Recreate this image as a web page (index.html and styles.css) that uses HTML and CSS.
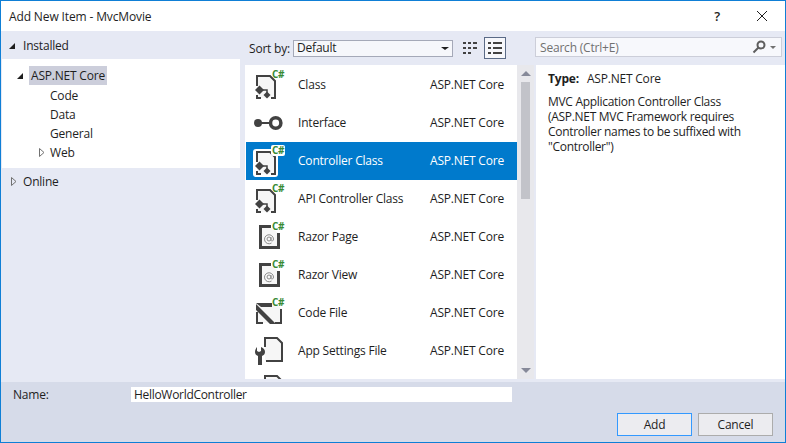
FILE: index.html
```html
<!DOCTYPE html>
<html lang="en">
<head>
  <meta charset="UTF-8">
  <title>Add New Item - MvcMovie</title>
  <link rel="stylesheet" href="styles.css">
</head>
<body>
  <svg class="defs" width="0" height="0">
    <symbol id="ic-class" viewBox="0 0 36 36">
      <rect class="halo" x="3" y="6" width="25" height="28" rx="3"/>
      <path class="doc" d="M7 9h13l5 5v17H7z"/>
      <path class="line" d="M7 19V9h13l5 5v17h-4M7 28v3h4"/>
      <path class="solid" d="M9.500 18.500l4.500 4.500-4.500 4.500L5 23z"/>
      <path class="link" d="M13 23h4v3"/>
      <path class="solid" d="M17 24.500l3.500 3.500-3.500 3.500-3.500-3.500z"/>
    </symbol>
    <symbol id="ic-interface" viewBox="0 0 36 36">
      <circle class="solid" cx="8" cy="18" r="4"/>
      <path class="bar" d="M11 18h10"/>
      <circle class="ring" cx="25.700" cy="18" r="5.200"/>
    </symbol>
    <symbol id="ic-razor" viewBox="0 0 36 36">
      <path class="doc" d="M10 8h10l8 6v15H10z"/>
      <path class="thick" d="M10.500 28V7.500H21M9 28.500h19.500V14"/>
      <circle class="at" cx="19" cy="20" r="2"/>
      <path class="at" d="M21 18v3c0 1.500 2.500 1.500 2.500-1a4.500 4.500 0 1 0-2 4"/>
    </symbol>
    <symbol id="ic-code" viewBox="0 0 36 36">
      <path class="doc" d="M7 9h19l6 5v14H7z"/>
      <path class="solid" d="M6 8h16v4H11zM6 9l20 20h-6L6 15z"/>
      <path class="line" d="M7 17v11h6M25 28h6V14"/>
    </symbol>
    <symbol id="ic-settings" viewBox="0 0 36 36">
      <path class="doc" d="M15 5h12l5 5v18H15z"/>
      <path class="line" d="M15 14V5h12l5 5v18H16"/>
      <path class="solid" d="M7 14v4l2 1 2-1v-4c3 1 4 3 4 5 0 2-1 3-3 4v9H8v-9c-2-1-3-2-3-4s1-4 2-5z"/>
    </symbol>
  </svg>

  <div class="window">
    <header class="titlebar">
      <span class="title">Add New Item - MvcMovie</span>
      <span class="help">?</span>
      <svg class="close" width="12" height="12" viewBox="0 0 12 12"><path d="M1 1l10 10M11 1L1 11"/></svg>
    </header>

    <div class="main">
      <aside class="sidebar">
        <div class="node-top installed"><i class="tri open"></i>Installed</div>
        <ul class="tree">
          <li class="sub"><i class="tri open"></i><span class="current">ASP.NET Core</span></li>
          <li>Code</li>
          <li>Data</li>
          <li>General</li>
          <li><svg class="tri closed" width="6" height="9" viewBox="0 0 6 9"><path d="M.5.5l4.500 4-4.500 4z"/></svg>Web</li>
        </ul>
        <div class="node-top online"><svg class="tri closed" width="6" height="9" viewBox="0 0 6 9"><path d="M.5.5l4.500 4-4.500 4z"/></svg>Online</div>
      </aside>

      <section class="center">
        <div class="toolbar">
          <label class="sort-label">Sort by:</label>
          <div class="select">Default<i class="caret"></i></div>
          <svg class="view-grid" width="14" height="14" viewBox="0 0 14 14">
            <path d="M0 0h3v2H0zM5 0h3v2H5zM10 0h4v2h-4zM0 5h3v2H0zM5 5h3v2H5zM10 5h4v2h-4zM0 10h3v2H0zM5 10h3v2H5z"/>
          </svg>
          <div class="view-list">
            <svg width="14" height="12" viewBox="0 0 14 12">
              <path d="M0 0h3v2H0zM5 0h9v2H5zM0 5h3v2H0zM5 5h9v2H5zM0 10h3v2H0zM5 10h9v2H5z"/>
            </svg>
          </div>
        </div>

        <div class="list-wrap">
          <ul class="items">
            <li class="item"><div class="icon"><svg><use href="#ic-class"/></svg><b class="cs">C#</b></div><span class="name">Class</span><span class="src">ASP.NET Core</span></li>
            <li class="item"><div class="icon"><svg><use href="#ic-interface"/></svg></div><span class="name">Interface</span><span class="src">ASP.NET Core</span></li>
            <li class="item selected"><div class="icon"><svg><use href="#ic-class"/></svg><b class="cs">C#</b></div><span class="name">Controller Class</span><span class="src">ASP.NET Core</span></li>
            <li class="item"><div class="icon"><svg><use href="#ic-class"/></svg><b class="cs">C#</b></div><span class="name">API Controller Class</span><span class="src">ASP.NET Core</span></li>
            <li class="item"><div class="icon"><svg><use href="#ic-razor"/></svg><b class="cs">C#</b></div><span class="name">Razor Page</span><span class="src">ASP.NET Core</span></li>
            <li class="item"><div class="icon"><svg><use href="#ic-razor"/></svg><b class="cs">C#</b></div><span class="name">Razor View</span><span class="src">ASP.NET Core</span></li>
            <li class="item"><div class="icon"><svg><use href="#ic-code"/></svg><b class="cs">C#</b></div><span class="name">Code File</span><span class="src">ASP.NET Core</span></li>
            <li class="item"><div class="icon"><svg><use href="#ic-settings"/></svg></div><span class="name">App Settings File</span><span class="src">ASP.NET Core</span></li>
            <li class="item"><div class="icon"><svg><use href="#ic-settings"/></svg></div></li>
          </ul>
          <div class="scrollbar">
            <i class="arrow up"></i>
            <div class="track"><div class="thumb"></div></div>
            <i class="arrow down"></i>
          </div>
        </div>
      </section>

      <section class="right">
        <div class="search">
          <span class="search-text">Search (Ctrl+E)</span>
          <svg width="14" height="14" viewBox="0 0 14 14"><circle cx="9" cy="5" r="3.500"/><path d="M6.500 7.500L1.500 12.500"/></svg>
          <i class="search-caret"></i>
        </div>
        <div class="details">
          <p class="type"><b>Type:</b>ASP.NET Core</p>
          <p class="desc">MVC Application Controller Class<br>(ASP.NET MVC Framework requires<br>Controller names to be suffixed with<br>"Controller")</p>
        </div>
      </section>
    </div>

    <footer class="footer">
      <div class="name-row">
        <label class="name-label">Name:</label>
        <div class="name-input">HelloWorldController</div>
      </div>
      <div class="buttons">
        <button class="btn primary">Add</button>
        <button class="btn">Cancel</button>
      </div>
    </footer>
  </div>
</body>
</html>
```

FILE: styles.css
```css
* {
  box-sizing: border-box;
}
html, body {
  margin: 0;
  padding: 0;
}
body {
  font-family: "Open Sans", "Noto Sans", sans-serif;
  font-size: 12px;
  letter-spacing: -0.2px;
  color: #1e1e1e;
  background: #fff;
  overflow: hidden;
}
ul {
  list-style: none;
  margin: 0;
  padding: 0;
}
p {
  margin: 0;
}
.defs {
  position: absolute;
}
.window {
  width: 786px;
  height: 443px;
  border: 1px solid #0f7fd6;
  display: flex;
  flex-direction: column;
}

/* title bar */
.titlebar {
  height: 30px;
  flex: none;
  background: #fff;
  display: flex;
  align-items: center;
  padding-left: 8px;
}
.title {
  flex: 1;
  letter-spacing: -0.13px;
}
.help {
  font-size: 13px;
  font-weight: 600;
  margin-right: 36px;
}
.close {
  margin-right: 17px;
}
.close path {
  stroke: #1e1e1e;
  fill: none;
}

/* main area */
.main {
  flex: 1;
  min-height: 0;
  background: #e6e9f4;
  display: flex;
}
.sidebar {
  width: 238px;
  flex: none;
  margin-left: 1px;
  padding-top: 4px;
}
.node-top {
  height: 24px;
  padding-left: 21px;
  display: flex;
  align-items: center;
  position: relative;
}
.installed {
  padding-bottom: 4px;
}
.online {
  margin-top: 1px;
}
.tree {
  background: #fff;
  height: 109px;
  padding-top: 7px;
}
.tree li {
  height: 19px;
  line-height: 19px;
  padding-left: 48px;
  position: relative;
}
.tree li.sub {
  height: 20px;
  padding-left: 27px;
}
.current {
  display: inline-block;
  background: #cccedb;
  padding: 0 2px;
}
.tri {
  position: absolute;
}
.tri.open {
  width: 0;
  height: 0;
  border-style: solid;
  border-width: 0 0 6px 6px;
  border-color: transparent transparent #1e1e1e transparent;
}
.tri.closed path {
  fill: #fff;
  stroke: #717171;
}
.online .tri.closed path {
  fill: #e6e9f4;
}
.node-top .tri.open {
  left: 7px;
  top: 8px;
}
.node-top .tri.closed {
  left: 9px;
  top: 8px;
}
.tree .tri.open {
  left: 15px;
  top: 7px;
}
.tree .tri.closed {
  left: 37px;
  top: 5px;
}

/* center column */
.center {
  width: 293px;
  flex: none;
  display: flex;
  flex-direction: column;
  padding-left: 5px;
}
.toolbar {
  height: 34px;
  flex: none;
  display: flex;
  align-items: center;
  padding-left: 4px;
}
.sort-label {
  width: 44px;
  flex: none;
}
.select {
  width: 160px;
  height: 17px;
  border: 1px solid #a5a9b8;
  background: #f6f7fb;
  padding-left: 3px;
  line-height: 14px;
  position: relative;
}
.caret {
  position: absolute;
  right: 3px;
  top: 6px;
  border-style: solid;
  border-width: 3px 4px 0 4px;
  border-color: #1e1e1e transparent transparent transparent;
}
.view-grid {
  margin-left: 10px;
  margin-top: 1px;
}
.view-grid path,
.view-list path {
  fill: #424242;
}
.view-list {
  width: 22px;
  height: 22px;
  margin-left: 7px;
  border: 1px solid #5a6a86;
  background: #f6f7fb;
  display: flex;
  align-items: center;
  justify-content: center;
}
.list-wrap {
  flex: 1;
  min-height: 0;
  display: flex;
  background: #fff;
  margin-bottom: 3px;
}
.items {
  width: 272px;
  flex: none;
  overflow: hidden;
  padding-top: 1px;
}
.item {
  height: 38px;
  display: flex;
  align-items: center;
  margin-left: 1px;
  padding-bottom: 1px;
}
.icon {
  width: 36px;
  height: 36px;
  flex: none;
  margin-left: 4px;
  margin-right: 12px;
  margin-top: 1px;
  position: relative;
}
.icon svg {
  width: 36px;
  height: 36px;
  display: block;
}
.name {
  width: 132px;
  flex: none;
}
.selected {
  background: #007acc;
  color: #fff;
  --halo: #fff;
}
.halo {
  fill: var(--halo, none);
}
.doc {
  fill: #f6f6f6;
}
.line {
  fill: none;
  stroke: #424242;
  stroke-width: 2;
}
.link {
  fill: none;
  stroke: #424242;
  stroke-width: 1.500;
}
.thick {
  fill: none;
  stroke: #424242;
  stroke-width: 3;
}
.solid {
  fill: #424242;
}
.bar {
  stroke: #424242;
  stroke-width: 2;
}
.ring {
  fill: #fff;
  stroke: #424242;
  stroke-width: 3.500;
}
.at {
  fill: none;
  stroke: #8a8a8a;
}
.cs {
  position: absolute;
  left: 21px;
  top: 2px;
  padding: 0 1px;
  height: 11px;
  line-height: 11px;
  border-radius: 2px;
  color: #388a34;
  font-size: 10px;
  letter-spacing: -0.3px;
  font-weight: 700;
}
.selected .cs {
  background: #fff;
}

/* scroll bar */
.scrollbar {
  width: 17px;
  flex: none;
  background: #e8e8ec;
  display: flex;
  flex-direction: column;
  align-items: center;
}
.arrow {
  flex: none;
  width: 0;
  height: 0;
  border-style: solid;
  border-color: transparent;
  margin: 6px 0;
}
.arrow.up {
  border-width: 0 5px 5px 5px;
  border-bottom-color: #868999;
}
.arrow.down {
  border-width: 5px 5px 0 5px;
  border-top-color: #868999;
}
.track {
  flex: 1;
  width: 100%;
  padding: 0 4px;
}
.thumb {
  height: 117px;
  background: #c2c3c9;
}

/* right column */
.right {
  flex: 1;
  display: flex;
  flex-direction: column;
  padding-left: 2px;
}
.search {
  height: 20px;
  width: 247px;
  margin-top: 6px;
  margin-bottom: 8px;
  border: 1px solid #ccced9;
  background: #f7f8fc;
  display: flex;
  align-items: center;
  padding-left: 4px;
  padding-right: 5px;
  color: #717171;
}
.search-text {
  flex: 1;
}
.search svg {
  fill: none;
  stroke: #5e5e5e;
  stroke-width: 2;
}
.search-caret {
  margin-left: 4px;
  border-style: solid;
  border-width: 3px 3px 0 3px;
  border-color: #717171 transparent transparent transparent;
}
.details {
  flex: 1;
  background: #fff;
  margin-bottom: 3px;
  margin-left: 1px;
  padding: 6px 12px;
  line-height: 15px;
}
.type {
  margin-bottom: 8px;
}
.type b {
  margin-right: 8px;
}
.desc {
  letter-spacing: -0.3px;
}

/* footer */
.footer {
  height: 60px;
  flex: none;
  background: #d6dbe9;
  padding-top: 5px;
}
.name-row {
  display: flex;
  align-items: center;
  height: 15px;
  padding-left: 12px;
}
.name-label {
  width: 118px;
  flex: none;
}
.name-input {
  width: 381px;
  height: 15px;
  background: #fff;
  line-height: 15px;
  padding-left: 3px;
  letter-spacing: -0.3px;
}
.buttons {
  display: flex;
  justify-content: flex-end;
  gap: 6px;
  margin-top: 11px;
  padding-right: 12px;
}
.btn {
  width: 75px;
  height: 23px;
  border: 1px solid #acacac;
  background: #ececf0;
  font: inherit;
  letter-spacing: inherit;
  color: #1e1e1e;
  padding: 0;
}
.primary {
  border-color: #3399ff;
}
```
